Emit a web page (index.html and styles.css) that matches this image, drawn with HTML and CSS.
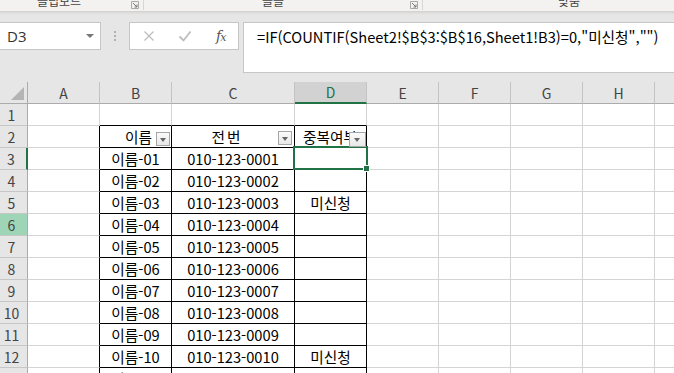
FILE: index.html
```html
<!DOCTYPE html>
<html lang="ko">
<head>
<meta charset="utf-8">
<title>Excel</title>
<link rel="stylesheet" href="styles.css">
</head>
<body>
<div class="ribbon">
  <div class="grp g1"><span class="glabel">클립보드</span></div>
  <div class="launch l1"><svg width="8" height="8" viewBox="0 0 8 8"><path d="M0.5 0.5h7v7h-7z" fill="none" stroke="#a8a8a8"/><path d="M2 2l4 4M3.5 6H6V3.5" fill="none" stroke="#777"/></svg></div>
  <div class="sep"></div>
  <div class="grp g2"><span class="glabel">글꼴</span></div>
  <div class="launch l2"><svg width="8" height="8" viewBox="0 0 8 8"><path d="M0.5 0.5h7v7h-7z" fill="none" stroke="#a8a8a8"/><path d="M2 2l4 4M3.5 6H6V3.5" fill="none" stroke="#777"/></svg></div>
  <div class="sep"></div>
  <div class="grp g3"><span class="glabel">맞춤</span></div>
</div>
<div class="fbar">
  <div class="namebox"><span class="nbtext">D3</span><span class="nbarrow"></span></div>
  <div class="dots"><i></i><i></i><i></i></div>
  <div class="fxbox">
    <svg class="ico" width="12" height="12" viewBox="0 0 12 12"><path d="M1.5 1.5l9 9M10.5 1.5l-9 9" stroke="#bdbdbd" stroke-width="1.3" fill="none"/></svg>
    <svg class="ico" width="14" height="12" viewBox="0 0 14 12"><path d="M1.5 6.5l4 4 7-9" stroke="#bdbdbd" stroke-width="1.8" fill="none"/></svg>
    <span class="fx">f<span class="fxx">x</span></span>
  </div>
  <div class="formula">=IF(COUNTIF(Sheet2!$B$3:$B$16,Sheet1!B3)=0,"미신청","")</div>
</div>
<div class="sheet">
  <div class="grid">
    <div class="ch corner"><span class="tri"></span></div>
    <div class="ch">A</div><div class="ch">B</div><div class="ch">C</div><div class="ch chsel">D</div><div class="ch">E</div><div class="ch">F</div><div class="ch">G</div><div class="ch">H</div><div class="ch chlast"></div>

    <div class="rh">1</div><div class="c"></div><div class="c tb"></div><div class="c tb"></div><div class="c tb"></div><div class="c"></div><div class="c"></div><div class="c"></div><div class="c"></div><div class="c"></div>

    <div class="rh">2</div><div class="c tl"></div>
    <div class="c t hd hdr"><span>이름</span><span class="fbtn"></span></div>
    <div class="c t hd hdc"><span class="hcText">전번</span><span class="fbtn"></span></div>
    <div class="c t hd hdd"><span class="clip">중복여부</span><span class="fbtn fbtnd"></span></div>
    <div class="c"></div><div class="c"></div><div class="c"></div><div class="c"></div><div class="c"></div>

    <div class="rh rhsel">3</div><div class="c tl"></div><div class="c t">이름-01</div><div class="c t">010-123-0001</div><div class="c t"></div><div class="c"></div><div class="c"></div><div class="c"></div><div class="c"></div><div class="c"></div>
    <div class="rh">4</div><div class="c tl"></div><div class="c t">이름-02</div><div class="c t">010-123-0002</div><div class="c t"></div><div class="c"></div><div class="c"></div><div class="c"></div><div class="c"></div><div class="c"></div>
    <div class="rh">5</div><div class="c tl"></div><div class="c t">이름-03</div><div class="c t">010-123-0003</div><div class="c t">미신청</div><div class="c"></div><div class="c"></div><div class="c"></div><div class="c"></div><div class="c"></div>
    <div class="rh rhhov">6</div><div class="c tl"></div><div class="c t">이름-04</div><div class="c t">010-123-0004</div><div class="c t"></div><div class="c"></div><div class="c"></div><div class="c"></div><div class="c"></div><div class="c"></div>
    <div class="rh">7</div><div class="c tl"></div><div class="c t">이름-05</div><div class="c t">010-123-0005</div><div class="c t"></div><div class="c"></div><div class="c"></div><div class="c"></div><div class="c"></div><div class="c"></div>
    <div class="rh">8</div><div class="c tl"></div><div class="c t">이름-06</div><div class="c t">010-123-0006</div><div class="c t"></div><div class="c"></div><div class="c"></div><div class="c"></div><div class="c"></div><div class="c"></div>
    <div class="rh">9</div><div class="c tl"></div><div class="c t">이름-07</div><div class="c t">010-123-0007</div><div class="c t"></div><div class="c"></div><div class="c"></div><div class="c"></div><div class="c"></div><div class="c"></div>
    <div class="rh">10</div><div class="c tl"></div><div class="c t">이름-08</div><div class="c t">010-123-0008</div><div class="c t"></div><div class="c"></div><div class="c"></div><div class="c"></div><div class="c"></div><div class="c"></div>
    <div class="rh">11</div><div class="c tl"></div><div class="c t">이름-09</div><div class="c t">010-123-0009</div><div class="c t"></div><div class="c"></div><div class="c"></div><div class="c"></div><div class="c"></div><div class="c"></div>
    <div class="rh">12</div><div class="c tl"></div><div class="c t">이름-10</div><div class="c t">010-123-0010</div><div class="c t">미신청</div><div class="c"></div><div class="c"></div><div class="c"></div><div class="c"></div><div class="c"></div>
    <div class="rh">13</div><div class="c tl"></div><div class="c t">이름-11</div><div class="c t">010-123-0011</div><div class="c t"></div><div class="c"></div><div class="c"></div><div class="c"></div><div class="c"></div><div class="c"></div>
  </div>
  <div class="selbox"></div>
  <div class="handle"></div>
</div>
</body>
</html>
```

FILE: styles.css
```css
* { box-sizing: border-box; }
html, body { margin: 0; padding: 0; }
body {
  width: 674px;
  height: 373px;
  overflow: hidden;
  background: #fff;
  font-family: "Noto Sans CJK KR", "Noto Sans", sans-serif;
  color: #000;
}

/* ribbon strip */
.ribbon {
  height: 11px;
  background: #f3f2f1;
  display: flex;
  overflow: hidden;
  font-size: 12px;
  color: #444;
}
.grp { height: 11px; overflow: hidden; }
.glabel { display: block; line-height: 12px; margin-top: -5px; white-space: nowrap; }
.g1 { margin-left: 37px; width: 94px; }
.g2 { margin-left: 118px; width: 148px; }
.g3 { margin-left: 135px; }
.launch { width: 12px; height: 11px; display: flex; align-items: flex-start; }
.launch svg { margin-top: 1px; }
.sep { width: 1px; height: 10px; background: #d6d6d6; }

/* formula bar */
.fbar {
  height: 71px;
  background: linear-gradient(#cfcfcf, #dedede 2px, #e6e6e6 4px);
  display: flex;
  align-items: flex-start;
  padding-top: 11px;
}
.namebox {
  margin-left: -2px;
  width: 103px;
  height: 28px;
  background: #fff;
  border: 1px solid #c6c6c6;
  display: flex;
  align-items: center;
  padding-left: 8px;
  position: relative;
}
.nbtext { font-family: "Open Sans", sans-serif; font-size: 15px; color: #333; line-height: 20px; }
.nbarrow {
  position: absolute;
  left: 87px;
  top: 11px;
  width: 0; height: 0;
  border-left: 4px solid transparent;
  border-right: 4px solid transparent;
  border-top: 4px solid #777;
}
.dots {
  width: 28px;
  height: 28px;
  display: flex;
  flex-direction: column;
  align-items: center;
  justify-content: center;
  gap: 2px;
}
.dots i { display: block; width: 2px; height: 2px; background: #b0b0b0; }
.fxbox {
  width: 110px;
  height: 28px;
  background: #fff;
  border: 1px solid #c6c6c6;
  display: flex;
  align-items: center;
  padding-left: 13px;
  gap: 23px;
}
.fx {
  font-family: "DejaVu Serif", "Liberation Serif", serif;
  font-style: italic;
  font-size: 14px;
  color: #555;
  letter-spacing: -1px;
  margin-left: 1px;
}
.fxx { font-size: 11px; }
.formula {
  margin-left: 4px;
  flex: 1;
  height: 51px;
  background: #fff;
  border: 1px solid #c6c6c6;
  border-right: none;
  padding: 4px 0 0 13px;
  font-size: 14.67px;
  line-height: 20px;
  color: #000;
  white-space: nowrap;
  overflow: hidden;
}

/* sheet */
.sheet { position: relative; }
.grid {
  display: grid;
  grid-template-columns: 28px 72px 72px 123px 72px 72px 72px 72px 72px 40px;
  grid-auto-rows: 22px;
}
.ch {
  background: #e6e6e6;
  border-right: 1px solid #c3c3c3;
  border-bottom: 1px solid #ababab;
  font-size: 14px;
  color: #444;
  display: flex;
  align-items: center;
  justify-content: center;
  line-height: 20px;
}
.chlast { border-right: none; }
.chsel {
  background: #d2d2d2;
  color: #217346;
  border-bottom: 2px solid #217346;
}
.corner { position: relative; border-right-color: #ababab; }
.tri {
  position: absolute;
  right: 3px;
  bottom: 3px;
  width: 0; height: 0;
  border-left: 13px solid transparent;
  border-bottom: 13px solid #b4b4b4;
}
.rh {
  background: #e6e6e6;
  border-right: 1px solid #ababab;
  border-bottom: 1px solid #c6c6c6;
  font-size: 14px;
  color: #444;
  display: flex;
  align-items: center;
  justify-content: center;
  padding-right: 4px;
  line-height: 20px;
}
.rhsel { border-right: 2px solid #217346; }
.rhhov { background: #9fd5b7; }
.c {
  border-right: 1px solid #d4d4d4;
  border-bottom: 1px solid #d4d4d4;
  font-size: 14.67px;
  line-height: 20px;
  display: flex;
  align-items: center;
  justify-content: center;
  padding-top: 1px;
  white-space: nowrap;
  overflow: hidden;
}
.tl { border-right-color: #000; }
.tb { border-bottom-color: #000; }
.t { border-right-color: #000; border-bottom-color: #000; }

.hd { position: relative; }
.hdr { justify-content: flex-end; padding-right: 19px; }
.hdc { padding-right: 12px; letter-spacing: 2px; }
.hdd { justify-content: flex-start; padding-left: 8px; }
.fbtn {
  position: absolute;
  right: 1px;
  bottom: 1px;
  width: 14px;
  height: 14px;
  border: 1px solid #a6a6a6;
  background: linear-gradient(#fbfbfb, #e8e8e8);
  z-index: 1;
}
.fbtn::after {
  content: "";
  position: absolute;
  left: 3px;
  top: 5px;
  width: 0; height: 0;
  border-left: 3.5px solid transparent;
  border-right: 3.5px solid transparent;
  border-top: 4px solid #666;
}
.hdc .fbtn { right: 2px; bottom: 2px; }
.hdd .fbtnd { right: 0; width: 17px; height: 15px; bottom: 0; }
.hdd .fbtnd::after { left: 4px; }

.selbox {
  position: absolute;
  left: 293px;
  top: 64px;
  width: 75px;
  height: 24px;
  border: 2px solid #217346;
  pointer-events: none;
}
.handle {
  position: absolute;
  left: 363px;
  top: 83px;
  width: 7px;
  height: 7px;
  background: #217346;
  border: 1px solid #fff;
}
```
